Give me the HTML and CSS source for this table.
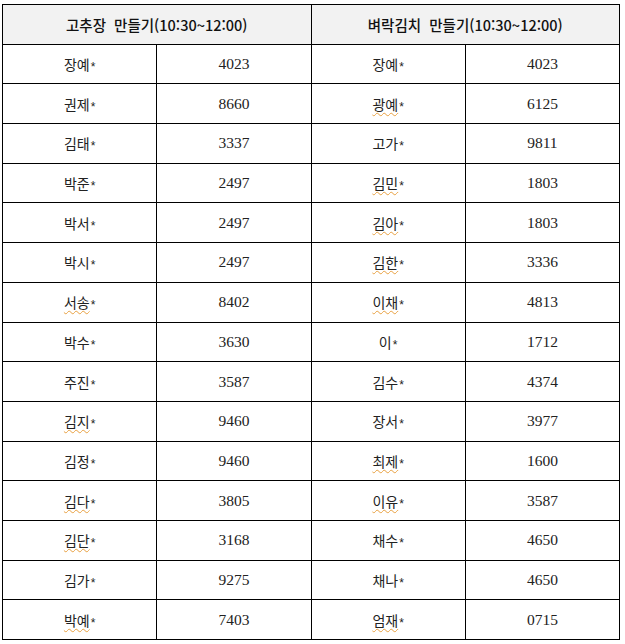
FILE: index.html
```html
<!DOCTYPE html>
<html lang="ko">
<head>
<meta charset="utf-8">
<title>만들기 명단</title>
<link rel="stylesheet" href="styles.css">
</head>
<body>
<table class="roster">
  <colgroup><col class="c"><col class="c"><col class="c"><col class="c"></colgroup>
  <thead>
    <tr><th colspan="2">고추장&nbsp; 만들기(10:30~12:00)</th><th colspan="2">벼락김치&nbsp; 만들기(10:30~12:00)</th></tr>
  </thead>
  <tbody>
    <tr><td>장예<span class="ast">*</span></td><td class="num">4023</td><td>장예<span class="ast">*</span></td><td class="num">4023</td></tr>
    <tr><td>권제<span class="ast">*</span></td><td class="num">8660</td><td><span class="sq">광예</span><span class="ast">*</span></td><td class="num">6125</td></tr>
    <tr><td>김태<span class="ast">*</span></td><td class="num">3337</td><td>고가<span class="ast">*</span></td><td class="num">9811</td></tr>
    <tr><td>박준<span class="ast">*</span></td><td class="num">2497</td><td><span class="sq">김민</span><span class="ast">*</span></td><td class="num">1803</td></tr>
    <tr><td>박서<span class="ast">*</span></td><td class="num">2497</td><td><span class="sq">김아</span><span class="ast">*</span></td><td class="num">1803</td></tr>
    <tr><td>박시<span class="ast">*</span></td><td class="num">2497</td><td><span class="sq">김한</span><span class="ast">*</span></td><td class="num">3336</td></tr>
    <tr><td><span class="sq">서송</span><span class="ast">*</span></td><td class="num">8402</td><td><span class="sq">이채</span><span class="ast">*</span></td><td class="num">4813</td></tr>
    <tr><td>박수<span class="ast">*</span></td><td class="num">3630</td><td>이<span class="ast">*</span></td><td class="num">1712</td></tr>
    <tr><td>주진<span class="ast">*</span></td><td class="num">3587</td><td>김수<span class="ast">*</span></td><td class="num">4374</td></tr>
    <tr><td><span class="sq">김지</span><span class="ast">*</span></td><td class="num">9460</td><td>장서<span class="ast">*</span></td><td class="num">3977</td></tr>
    <tr><td>김정<span class="ast">*</span></td><td class="num">9460</td><td><span class="sq">최제</span><span class="ast">*</span></td><td class="num">1600</td></tr>
    <tr><td><span class="sq">김다</span><span class="ast">*</span></td><td class="num">3805</td><td><span class="sq">이유</span><span class="ast">*</span></td><td class="num">3587</td></tr>
    <tr><td><span class="sq">김단</span><span class="ast">*</span></td><td class="num">3168</td><td>채수<span class="ast">*</span></td><td class="num">4650</td></tr>
    <tr><td>김가<span class="ast">*</span></td><td class="num">9275</td><td>채나<span class="ast">*</span></td><td class="num">4650</td></tr>
    <tr><td><span class="sq">박예</span><span class="ast">*</span></td><td class="num">7403</td><td><span class="sq">엄재</span><span class="ast">*</span></td><td class="num">0715</td></tr>
  </tbody>
</table>
</body>
</html>
```

FILE: styles.css
```css
html, body {
  margin: 0;
  padding: 0;
  background: #ffffff;
}

body {
  padding: 4px 0 0 2px;
  font-family: "Noto Sans CJK KR", "Liberation Sans", sans-serif;
  color: #1a1a1a;
}

.roster {
  border-collapse: collapse;
  width: 618px;
  table-layout: fixed;
}

.roster .c {
  width: 25%;
}

.roster th,
.roster td {
  border: 1.5px solid #000;
  text-align: center;
  vertical-align: middle;
  padding: 0;
  height: 38.7px;
}

.roster th {
  background: #f2f2f2;
  font-family: "Noto Sans CJK KR", "Liberation Sans", sans-serif;
  font-weight: 500;
  font-size: 14.5px;
  color: #111;
}

.roster td {
  font-family: "Noto Sans CJK KR", "Liberation Serif", sans-serif;
  font-weight: 400;
  font-size: 14px;
  color: #222;
}

.roster td.num {
  font-family: "Liberation Serif", serif;
  font-size: 15.5px;
}

.ast {
  font-family: "Liberation Sans", sans-serif;
  font-size: 12px;
  margin-left: 1px;
  position: relative;
  top: 1px;
}

.sq {
  text-decoration: underline wavy #e8a040;
  text-decoration-thickness: 1px;
  text-underline-offset: 2px;
}
```
